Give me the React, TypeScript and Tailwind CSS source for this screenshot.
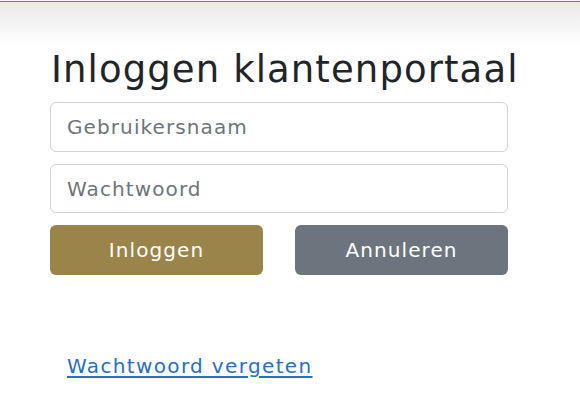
import React from 'react';

const font = { fontFamily: '"DejaVu Sans", "Noto Sans", sans-serif' };

export default function App() {
  return (
    <div className="min-h-[399px] w-[580px] bg-white text-[#212529]" style={font}>
      <div className="h-[1px] bg-[#f4f4f4]" />
      <div className="h-[1px] bg-[#8c7b4b]" />
      <div className="h-[44px] bg-gradient-to-b from-[#e9e9e9] to-white" />
      <div className="pl-[50px] w-[508px]">
        <h1 className="whitespace-nowrap text-[37px] leading-none tracking-[1.1px] pl-[1px] pt-[5px] pb-[14px] text-[#212529]">
          Inloggen klantenportaal
        </h1>
        <form className="flex flex-col gap-[12px]" onSubmit={(e) => e.preventDefault()}>
          <input
            type="text"
            placeholder="Gebruikersnaam"
            className="h-[50px] rounded-[6px] border border-[#ced4da] px-[16px] text-[20px] tracking-[1.1px] text-[#212529] placeholder:text-[#6c757d] outline-none"
            style={font}
          />
          <input
            type="password"
            placeholder="Wachtwoord"
            className="h-[49px] rounded-[6px] border border-[#ced4da] px-[16px] text-[20px] tracking-[1.1px] text-[#212529] placeholder:text-[#6c757d] outline-none"
            style={font}
          />
          <div className="flex gap-[32px]">
            <button
              type="submit"
              className="flex-1 h-[50px] rounded-[6px] bg-[#9a844a] text-white text-[20px] tracking-[1.1px]"
              style={font}
            >
              Inloggen
            </button>
            <button
              type="button"
              className="flex-1 h-[50px] rounded-[6px] bg-[#6c757d] text-white text-[20px] tracking-[1.1px]"
              style={font}
            >
              Annuleren
            </button>
          </div>
        </form>
        <div className="pt-[76px] pl-[17px]">
          <a href="#" className="text-[20px] tracking-[1.35px] text-[#2470c8] underline underline-offset-[3px]">
            Wachtwoord vergeten
          </a>
        </div>
      </div>
    </div>
  );
}
